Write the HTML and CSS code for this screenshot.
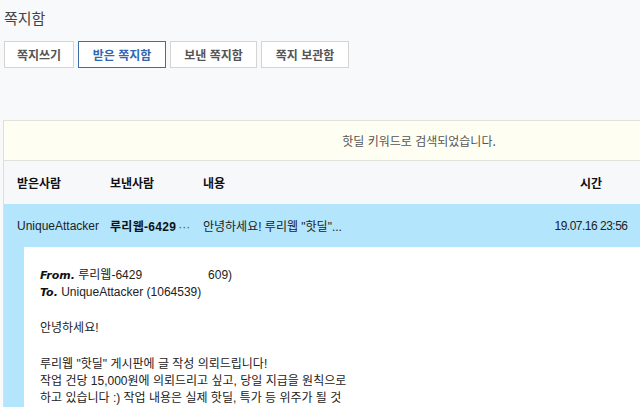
FILE: index.html
```html
<!DOCTYPE html>
<html lang="ko">
<head>
<meta charset="utf-8">
<title>쪽지함</title>
<link rel="stylesheet" href="styles.css">
</head>
<body>
<div class="page">
  <h1 class="title">쪽지함</h1>
  <div class="tabs">
    <a class="tab">쪽지쓰기</a>
    <a class="tab tab-active">받은 쪽지함</a>
    <a class="tab">보낸 쪽지함</a>
    <a class="tab">쪽지 보관함</a>
  </div>

  <div class="list">
    <div class="notice">핫딜 키워드로 검색되었습니다.</div>
    <div class="row head">
      <div>받은사람</div>
      <div>보낸사람</div>
      <div>내용</div>
      <div class="time">시간</div>
    </div>
    <div class="row item">
      <div>UniqueAttacker</div>
      <div><b>루리웹-6429</b><span class="dots">···</span></div>
      <div>안녕하세요! 루리웹 "핫딜"...</div>
      <div class="time t">19.07.16 23:56</div>
    </div>
    <div class="detail">
      <div class="msg">
        <p><span class="lbl">From.</span> 루리웹-6429<span class="mask"></span>609)</p>
        <p><span class="lbl">To.</span> UniqueAttacker (1064539)</p>
        <p class="blank"></p>
        <p>안녕하세요!</p>
        <p class="blank"></p>
        <p>루리웹 "핫딜" 게시판에 글 작성 의뢰드립니다!</p>
        <p>작업 건당 15,000원에 의뢰드리고 싶고, 당일 지급을 원칙으로</p>
        <p>하고 있습니다 :) 작업 내용은 실제 핫딜, 특가 등 위주가 될 것</p>
      </div>
    </div>
  </div>
</div>
</body>
</html>
```

FILE: styles.css
```css
html, body {
  margin: 0;
  padding: 0;
  background: #f8f9fa;
  overflow: hidden;
}

body {
  width: 640px;
  height: 407px;
  font-family: "Liberation Sans", "Noto Sans CJK KR", sans-serif;
  font-size: 12px;
  color: #222;
}

.page {
  padding: 0 0 0 3px;
}

.title {
  margin: 0;
  padding: 6px 0 0 1px;
  font-family: "Noto Sans CJK KR", sans-serif;
  font-size: 15px;
  line-height: 24px;
  font-weight: 400;
  color: #444;
}

.tabs {
  display: flex;
  gap: 4px;
  margin-top: 11px;
  padding-left: 1px;
}

.tab {
  box-sizing: border-box;
  height: 27px;
  display: flex;
  align-items: center;
  justify-content: center;
  border: 1px solid #d4d4d4;
  background: #fff;
  font-family: "Noto Sans CJK KR", sans-serif;
  font-size: 12px;
  font-weight: 700;
  color: #555;
  padding: 0 10px;
}
.tab:nth-child(1) { width: 70px; }
.tab:nth-child(2) { width: 88px; }
.tab:nth-child(3) { width: 87px; }
.tab:nth-child(4) { width: 88px; }

.tab-active {
  border-color: #3f6ea6;
  color: #2f67b0;
}

.list {
  margin-top: 52px;
  border-left: 1px solid #dedede;
}

.notice {
  box-sizing: border-box;
  height: 41px;
  border-top: 1px solid #e2e2dc;
  border-bottom: 1px solid #e2e2dc;
  background: #fefef2;
  display: flex;
  align-items: center;
  justify-content: center;
  padding-left: 194px;
  font-family: "Noto Sans CJK KR", sans-serif;
  font-size: 12px;
  color: #555;
}

.row {
  display: grid;
  grid-template-columns: 93px 93px 1fr 78px;
  align-items: center;
  height: 43px;
  padding: 0 10px 0 13px;
  white-space: nowrap;
}

.head {
  background: #f7f8fa;
  font-family: "Noto Sans CJK KR", sans-serif;
  font-weight: 700;
  color: #111;
}

.item {
  background: #b3e5fc;
  color: #222;
}

.item b {
  font-weight: 700;
  color: #111;
  letter-spacing: 0.3px;
}

.dots {
  color: #555;
  padding-left: 2px;
}

.time {
  text-align: center;
}

.t {
  letter-spacing: -0.5px;
}

.detail {
  background: #b3e5fc;
  padding-left: 20px;
}

.msg {
  background: #fff;
  padding: 20px 0 0 16px;
  height: 150px;
  color: #222;
}

.msg p {
  margin: 0;
  line-height: 17px;
  height: 17px;
  white-space: nowrap;
}

.msg p.blank {
  height: 19px;
}

.lbl {
  font-family: "DejaVu Sans", sans-serif;
  font-weight: 700;
  font-style: italic;
  font-size: 11px;
  color: #111;
}

.mask {
  display: inline-block;
  width: 66px;
}
```
